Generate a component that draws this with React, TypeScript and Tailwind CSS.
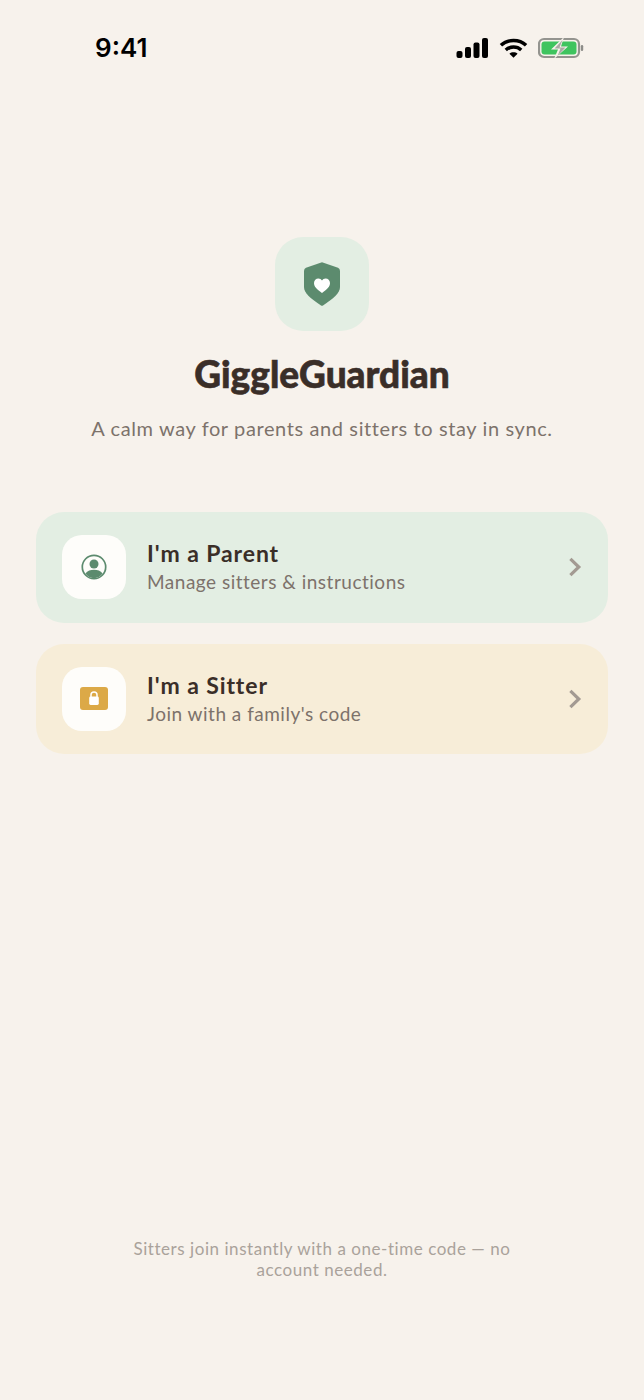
import React from 'react';

function StatusBar() {
  return (
    <div className="flex h-[95px] items-start justify-between pl-[95px] pr-[60px] pt-[31px]">
      <span className="font-['Inter',sans-serif] text-[26px] font-semibold leading-[34px] text-black">9:41</span>
      <div className="flex items-center gap-[10px] pt-[6px]">
        <svg width="33" height="22" viewBox="0 0 33 22" fill="#000" className="ml-[2px]">
          <rect x="0.5" y="14" width="6" height="7" rx="2" />
          <rect x="9" y="10" width="6" height="11" rx="2" />
          <rect x="17.5" y="5.5" width="6" height="15.5" rx="2" />
          <rect x="26" y="1" width="6" height="20" rx="2" />
        </svg>
        <svg width="29" height="22" viewBox="0 0 30 22" fill="none" stroke="#000" strokeWidth="3.6">
          <path d="M2 8.2 C9 1.6 21 1.6 28 8.2" />
          <path d="M7 13 C11.5 9 18.5 9 23 13" />
          <path d="M15 21 L10.8 16.9 C13 15 17 15 19.2 16.9 Z" fill="#000" stroke="none" />
        </svg>
        <svg width="46" height="22" viewBox="0 0 46 22">
          <rect x="1" y="2" width="40" height="18" rx="5" fill="none" stroke="#94948f" strokeWidth="2.2" />
          <rect x="3.5" y="4.5" width="35" height="13" rx="3" fill="#3fc45f" />
          <path d="M26 0 L13 12.5 H20 L16 22 L30 9.5 H23 Z" fill="#f7f2ec" />
          <path d="M24.5 3 L16.5 11.5 H22.5 L19.5 19 L27.5 10.5 H21.5 Z" fill="#a9a9a4" />
          <rect x="42.8" y="8" width="2.4" height="6" rx="1.2" fill="#8d8d89" />
        </svg>
      </div>
    </div>
  );
}

function ShieldLogo() {
  return (
    <svg width="36" height="44" viewBox="0 0 36 44">
      <path
        d="M18 0.3 L34 5.8 Q36 6.6 36 9 V25 C36 31 30 36 19 43.5 Q18 44 17 43.5 C6 36 0 31 0 25 V9 Q0 6.6 2 5.8 Z"
        fill="#5C8B6E"
      />
      <path
        d="M18 31 C12.5 27 10 24.5 10 21 C10 18.4 12 16.4 14.4 16.4 C16 16.4 17.2 17.2 18 18.5 C18.8 17.2 20 16.4 21.6 16.4 C24 16.4 26 18.4 26 21 C26 24.5 23.5 27 18 31 Z"
        fill="#fff"
      />
    </svg>
  );
}

function ParentIcon() {
  return (
    <svg width="26" height="26" viewBox="0 0 26 26">
      <circle cx="13" cy="13" r="11.7" fill="none" stroke="#5C8B6E" strokeWidth="1.7" />
      <circle cx="13" cy="10" r="4.5" fill="#5C8B6E" />
      <path d="M4.4 19.6 C6.5 16.6 9.5 15.8 13 15.8 C16.5 15.8 19.5 16.6 21.6 19.6 C19.4 22.6 16.4 24.2 13 24.2 C9.6 24.2 6.6 22.6 4.4 19.6 Z" fill="#5C8B6E" />
    </svg>
  );
}

function SitterIcon() {
  return (
    <svg width="28" height="23" viewBox="0 0 28 23">
      <rect width="28" height="23" rx="3" fill="#DCA947" />
      <path d="M11 10 V7.8 C11 6 12.3 5 14 5 C15.7 5 17 6 17 7.8 V10" fill="none" stroke="#fff" strokeWidth="1.5" />
      <rect x="9.2" y="9.5" width="9.6" height="8.5" rx="1.4" fill="#fff" />
    </svg>
  );
}

function Chevron() {
  return (
    <svg width="14" height="20" viewBox="0 0 14 20" fill="none" stroke="#A39A92" strokeWidth="3.2" className="shrink-0">
      <path d="M2.4 1.8 L10.8 10 L2.4 18.2" />
    </svg>
  );
}

function RoleCard({ bg, icon, title, subtitle }: { bg: string; icon: React.ReactNode; title: string; subtitle: string }) {
  return (
    <button className={`flex h-[110.5px] w-full items-center rounded-[28px] pl-[26px] pr-[26px] text-left ${bg}`}>
      <div className="flex h-[64px] w-[64px] shrink-0 items-center justify-center rounded-[20px] bg-[#FEFDFA]">{icon}</div>
      <div className="ml-[21px] flex-1">
        <div className="text-[23px] font-bold leading-[28px] tracking-[0.9px] text-[#3A2E28]">{title}</div>
        <div className="mt-[2px] text-[19px] leading-[26px] tracking-[0.5px] text-[#7D726B]">{subtitle}</div>
      </div>
      <Chevron />
    </button>
  );
}

export default function App() {
  return (
    <div className="flex h-[1400px] w-full flex-col bg-[#F7F2EC] font-['Lato',sans-serif]">
      <StatusBar />
      <div className="flex flex-col items-center px-[36px] pt-[142px]">
        <div className="flex h-[94px] w-[94px] items-center justify-center rounded-[28px] bg-[#E3EEE3]">
          <ShieldLogo />
        </div>
        <h1 className="mt-[21px] font-['Lato',sans-serif] text-[37px] font-black leading-[44px] text-[#3A2E28] [-webkit-text-stroke:0.6px_#3A2E28]">GiggleGuardian</h1>
        <p className="mt-[18px] text-[20px] leading-[28px] tracking-[0.61px] text-[#7D726B]">
          A calm way for parents and sitters to stay in sync.
        </p>
        <div className="mt-[70px] flex w-full flex-col gap-[21px]">
          <RoleCard bg="bg-[#E3EEE3]" icon={<ParentIcon />} title="I'm a Parent" subtitle="Manage sitters & instructions" />
          <RoleCard bg="bg-[#F7EDD8]" icon={<SitterIcon />} title="I'm a Sitter" subtitle="Join with a family's code" />
        </div>
      </div>
      <div className="mt-auto flex justify-center pb-[120px]">
        <p className="w-[400px] text-center text-[17px] leading-[21px] tracking-[0.55px] text-[#AAA29B]">
          Sitters join instantly with a one-time code — no account needed.
        </p>
      </div>
    </div>
  );
}
